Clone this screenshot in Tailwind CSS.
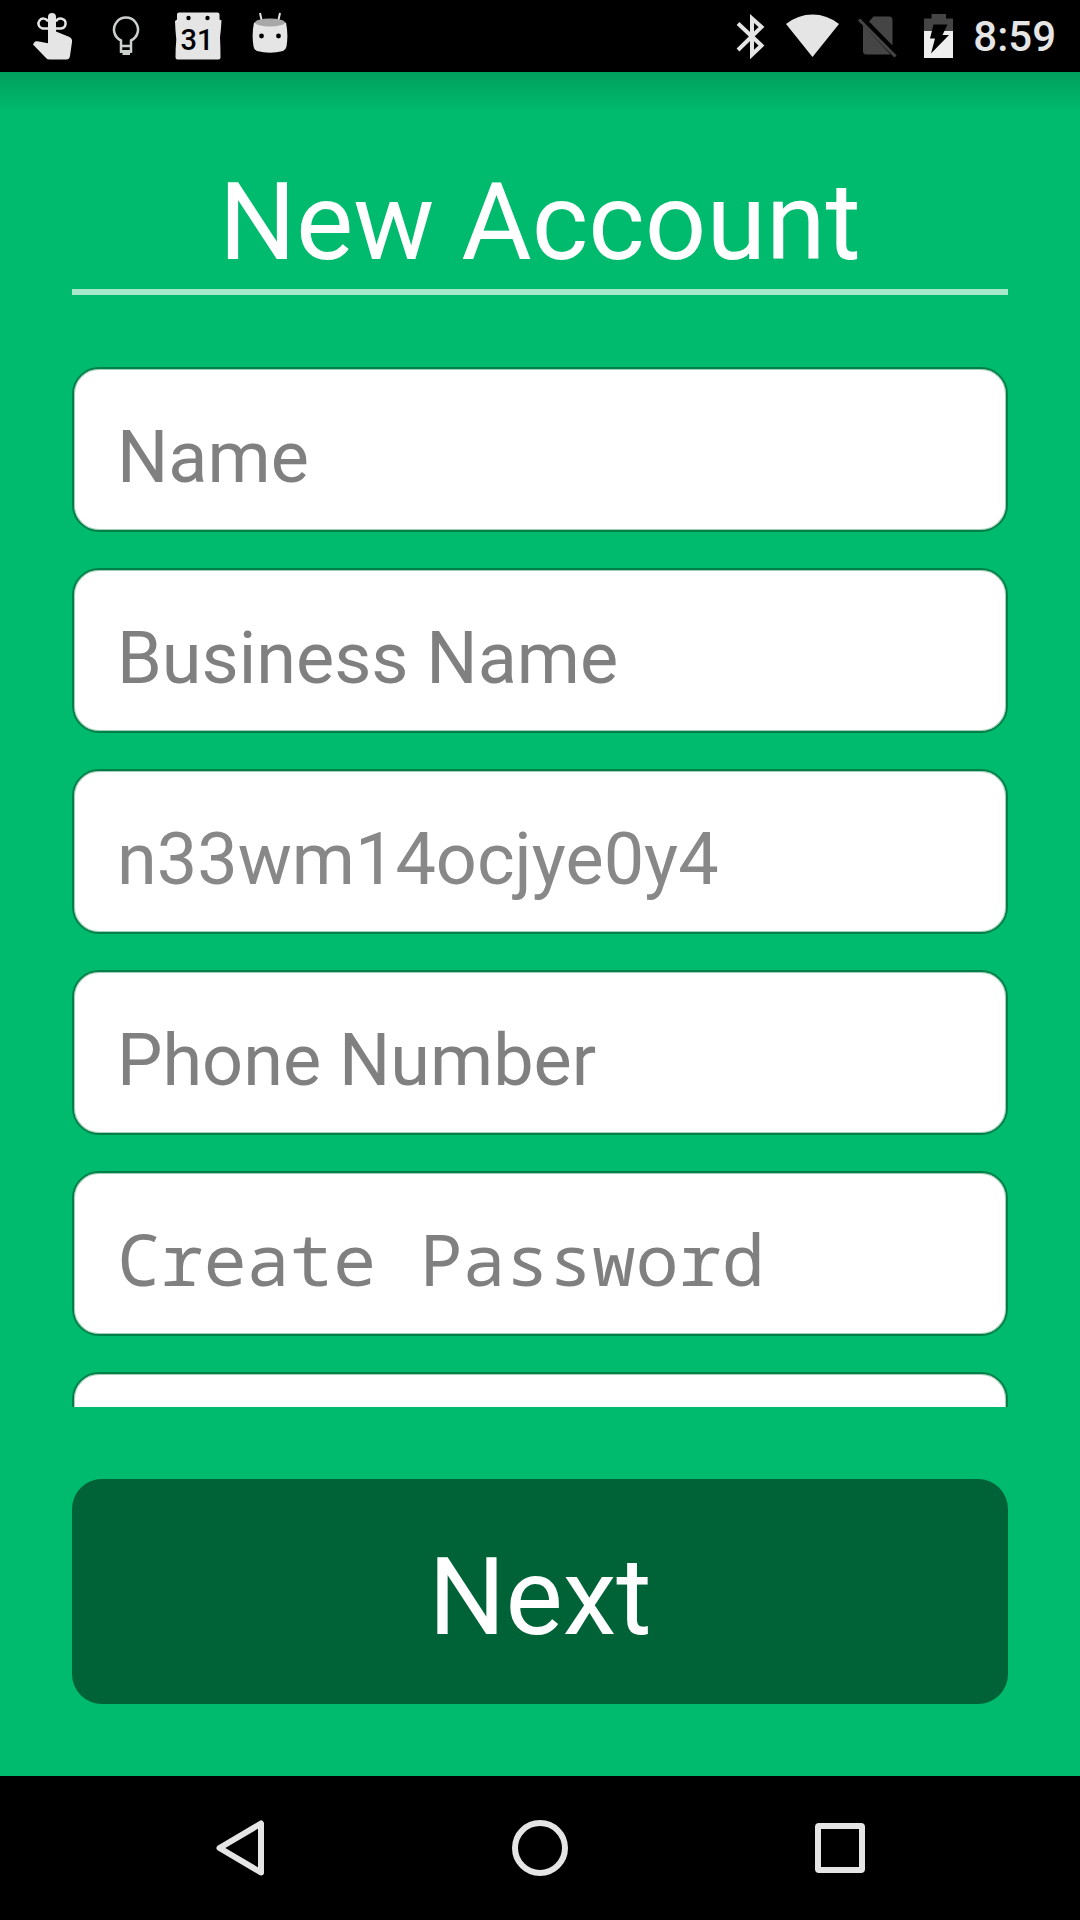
<!DOCTYPE html>
<html lang="en">
<head>
<meta charset="utf-8">
<meta name="viewport" content="width=device-width, initial-scale=1">
<title>New Account</title>
<script src="https://cdn.jsdelivr.net/npm/@tailwindcss/browser@4"></script>
</head>
<body class="flex h-screen flex-col overflow-hidden bg-[#00bb6d] font-[Roboto,sans-serif]">
<header class="flex h-[72px] shrink-0 items-center justify-between bg-black pr-6 pl-[18px] text-[#e5e5e5]">
  <div class="flex">
    <!-- reminder hand -->
    <svg class="size-[72px]" viewBox="18 0 72 72" fill="currentColor">
      <path d="M48 17a4 4 0 0 1 8 0v14.500l13.500 5.500q3 1.500 2.500 5l-2 14q-.600 3.500-3.500 3.500h-17q-2 0-3.500-1.500L33 44.500l1.500-2.500q1-1 3-.700l10.500 2z"/>
      <path d="M48 28.500h-5.500a5 5 0 1 1 5.500-7M56 28.500h5a5 5 0 1 0-5-7" fill="none" stroke="currentColor" stroke-width="2.500"/>
    </svg>
    <!-- light bulb -->
    <svg class="size-[72px]" viewBox="90 0 72 72" fill="none" stroke="#ccd0cc" stroke-width="2.500">
      <path d="M121 43v-2.500a12 12 0 1 1 10 0V51.500h-10zM120 46h12"/>
      <path d="M120 51.300h12M122.500 53.500h7.500" stroke-width="2.800"/>
    </svg>
    <!-- calendar -->
    <svg class="size-[72px]" viewBox="162 0 72 72">
      <path d="M179 12.500h38.500q2 0 2 2v5l2 1q-.500 9-1.500 17 .500 10 .500 20 0 2-2 2h-41q-2 0-2-2 0-9 .800-18-1-9-1.300-18.500l2-1.500v-5q0-2 2-2z" fill="#e5e5e5"/>
      <circle cx="188.500" cy="18" r="2.200"/><circle cx="207.500" cy="18" r="2.200"/>
      <text x="197" y="50" text-anchor="middle" font-family="Roboto, sans-serif" font-size="29" font-weight="500">31</text>
    </svg>
    <!-- robot head -->
    <svg class="size-[72px]" viewBox="234 0 72 72">
      <path d="M260 13l2 9M280 13l-2 9" stroke="#e5e5e5" stroke-width="2"/>
      <path d="M254 22.500q16 6 32 0 2.500 12 .500 24-.500 3-3.500 4.500-13 3.500-26 0-3-1.500-3.500-4.500-2-12 .500-24z" fill="#e5e5e5"/>
      <ellipse cx="270" cy="22.500" rx="15" ry="4" fill="#a8a8a8"/>
      <circle cx="261.500" cy="36" r="2.400"/><circle cx="278.500" cy="36" r="2.400"/>
    </svg>
  </div>
  <div class="flex items-center">
    <!-- bluetooth -->
    <svg class="h-[72px] w-[54px]" viewBox="722 0 54 72" fill="none" stroke="currentColor" stroke-width="4">
      <path d="M737 23.500l23.500 22-9.500 9V18.500l9.500 8.500-23.500 23"/>
    </svg>
    <!-- wifi -->
    <svg class="h-[72px] w-[72px]" viewBox="776 0 72 72" fill="currentColor">
      <path d="M785 24q12-9.500 26.500-9.500T838 24l-26.500 33z"/>
    </svg>
    <!-- no sim -->
    <svg class="h-[72px] w-[60px]" viewBox="848 0 60 72" fill="#454545">
      <path d="M872.500 16.500H888q3.500 0 3.500 3.500v25.500L868 21.500zM862 25v26q0 3.500 3.500 3.500h24z"/>
      <path d="M858 19.500l36.500 37" stroke="#454545" stroke-width="3.200"/>
    </svg>
    <!-- charging battery -->
    <svg class="h-[72px] w-[60px]" viewBox="908 0 60 72">
      <path d="M923 31V18.500h7.500V14h14.500v4.500h7V31z" fill="#454545"/>
      <path d="M923 31h29v27h-29z" fill="#eee"/>
      <path d="M932.500 24.500h14l-5 10.500h6.500l-18 18.500 4-15h-5z" fill="#000"/>
    </svg>
    <span class="ml-1 pt-0.5 text-[42px] leading-[50px] font-medium">8:59</span>
  </div>
</header>
<div class="h-10 shrink-0 bg-linear-to-b from-black/15 to-transparent"></div>
<main class="flex min-h-0 flex-1 flex-col px-[72px] pt-12 pb-[72px]">
  <h1 class="shrink-0 border-b-[6px] border-[#a6e8cc] pb-1 text-center text-[108px] leading-[125px] text-white">New Account</h1>
  <form class="mt-[72px] flex min-h-0 flex-1 flex-col">
    <div class="flex min-h-0 flex-1 flex-col gap-9 overflow-hidden text-[72px] text-[#808080]">
      <input aria-label="Name" placeholder="Name" class="h-[165px] w-full shrink-0 rounded-[27px] border-2 border-[#008048] bg-white px-[43px] pt-4 inset-shadow-[0_0_0_1px_#a0ceb7] outline-none placeholder:text-[#808080]">
      <input aria-label="Business Name" placeholder="Business Name" class="h-[165px] w-full shrink-0 rounded-[27px] border-2 border-[#008048] bg-white px-[43px] pt-4 inset-shadow-[0_0_0_1px_#a0ceb7] outline-none placeholder:text-[#808080]">
      <input aria-label="Account ID" value="n33wm14ocjye0y4" readonly class="h-[165px] w-full shrink-0 rounded-[27px] border-2 border-[#008048] bg-white px-[43px] pt-4 inset-shadow-[0_0_0_1px_#a0ceb7] text-[#888888] outline-none">
      <input aria-label="Phone Number" type="tel" placeholder="Phone Number" class="h-[165px] w-full shrink-0 rounded-[27px] border-2 border-[#008048] bg-white px-[43px] pt-4 inset-shadow-[0_0_0_1px_#a0ceb7] outline-none placeholder:text-[#808080]">
      <input aria-label="Create Password" type="password" placeholder="Create Password" class="h-[165px] w-full shrink-0 rounded-[27px] border-2 border-[#008048] bg-white px-[43px] pt-2 inset-shadow-[0_0_0_1px_#a0ceb7] font-['Droid_Sans_Mono','Noto_Sans_Mono','DejaVu_Sans_Mono',monospace] outline-none placeholder:text-[#808080]">
      <input aria-label="Confirm Password" type="password" class="h-[165px] w-full shrink-0 rounded-[27px] border-2 border-[#008048] bg-white px-[43px] pt-2 inset-shadow-[0_0_0_1px_#a0ceb7] outline-none">
    </div>
    <button type="submit" class="mt-[72px] h-[225px] w-full shrink-0 rounded-[30px] bg-[#006237] pt-3 text-[108px] leading-[125px] text-white">Next</button>
  </form>
</main>
<nav class="flex h-[144px] shrink-0 items-center justify-around bg-black px-[90px] text-[#e5e5e5]">
  <button aria-label="Back"><svg class="size-[72px]" viewBox="204 1812 72 72" fill="none" stroke="currentColor" stroke-width="6" stroke-linejoin="round"><path d="M261 1823.500v49L219.500 1848z"/></svg></button>
  <button aria-label="Home"><svg class="size-[72px]" viewBox="504 1812 72 72" fill="none" stroke="currentColor" stroke-width="6"><circle cx="540" cy="1848" r="25"/></svg></button>
  <button aria-label="Recents"><svg class="size-[72px]" viewBox="804 1812 72 72" fill="none" stroke="currentColor" stroke-width="6"><rect x="818" y="1826" width="44" height="44" rx="1"/></svg></button>
</nav>
</body>
</html>
